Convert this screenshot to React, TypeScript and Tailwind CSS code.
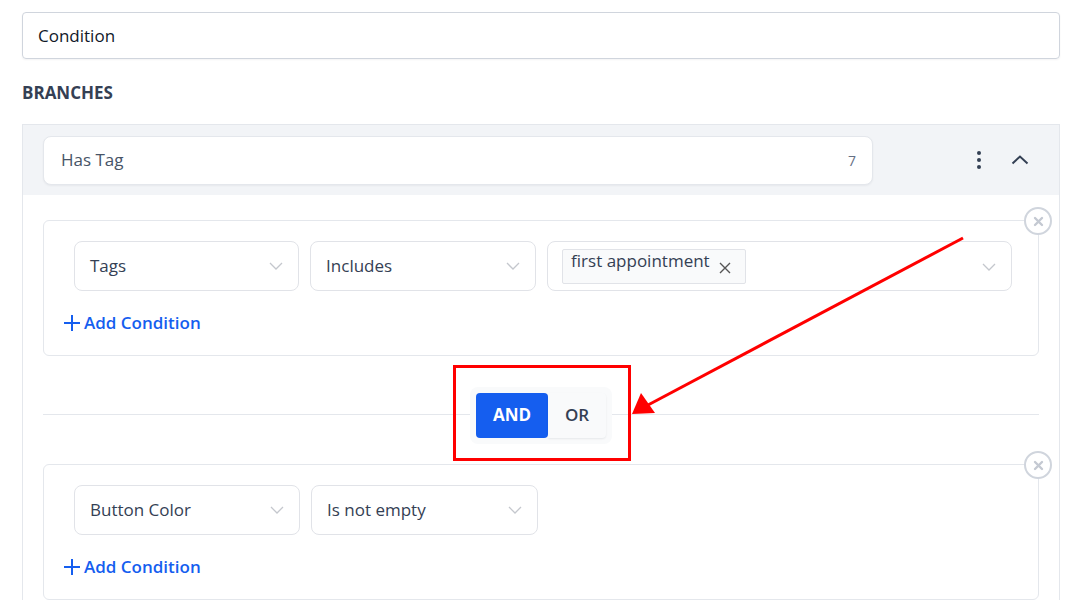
import React from "react";

function ChevronDown() {
  return (
    <svg width="14" height="8" viewBox="0 0 14 8" fill="none" className="shrink-0">
      <path d="M1 1l6 6 6-6" stroke="#c4c7cd" strokeWidth="1.3" />
    </svg>
  );
}

function Select({ label, w }: { label: string; w: string }) {
  return (
    <div className={`${w} h-[50px] border border-[#e1e3e8] rounded-[8px] flex items-center justify-between pl-[15px] pr-[15px] text-[17px] text-[#344054]`}>
      <span>{label}</span>
      <ChevronDown />
    </div>
  );
}

function CloseCircle() {
  return (
    <div className="absolute -right-[14px] -top-[14px] w-[28px] h-[28px] rounded-full border-[2.5px] border-[#d0d5dd] bg-white flex items-center justify-center">
      <svg width="11" height="11" viewBox="0 0 11 11">
        <path d="M2 2l7 7M9 2l-7 7" stroke="#c4c9d2" strokeWidth="2.4" strokeLinecap="round" />
      </svg>
    </div>
  );
}

function AddCondition() {
  return (
    <div className="flex items-center gap-[3px] text-[#155eef] font-semibold text-[17px] ml-[-11px]">
      <svg width="18" height="18" viewBox="0 0 18 18">
        <path d="M9 1v16M1 9h16" stroke="#155eef" strokeWidth="2" />
      </svg>
      <span>Add Condition</span>
    </div>
  );
}

export default function App() {
  return (
    <div className="w-[1083px] h-[613px] overflow-hidden bg-white relative font-['Open_Sans',sans-serif]">
      <div className="pl-[22px] pr-[23px] pt-[12px]">
        <div className="h-[47px] border border-[#d0d5dd] rounded-[4px] flex items-center px-[15px] text-[17px] text-[#101828] shadow-[0_1px_2px_rgba(16,24,40,0.05)]">
          Condition
        </div>
        <div className="mt-[23px] text-[17px] font-bold text-[#344054] leading-[22px]">BRANCHES</div>
        <div className="mt-[20px] border border-b-0 border-[#e4e7ec]">
          <div className="h-[70px] bg-[#f2f4f7] flex items-center pl-[20px]">
            <div className="w-[830px] h-[49px] bg-white rounded-[8px] border border-[#e4e7ec] shadow-[0_1px_2px_rgba(16,24,40,0.05)] flex items-center justify-between pl-[17px] pr-[16px]">
              <span className="text-[17px] text-[#475467]">Has Tag</span>
              <span className="text-[14px] text-[#667085]">7</span>
            </div>
            <div className="ml-[104px] flex flex-col gap-[3px]">
              <div className="w-[4px] h-[4px] rounded-full bg-[#344054]" />
              <div className="w-[4px] h-[4px] rounded-full bg-[#344054]" />
              <div className="w-[4px] h-[4px] rounded-full bg-[#344054]" />
            </div>
            <svg width="18" height="10" viewBox="0 0 18 10" className="ml-[30px]">
              <path d="M1.5 8.5L9 1.5l7.5 7" stroke="#344054" strokeWidth="2" fill="none" />
            </svg>
          </div>
          <div className="px-[20px] pt-[25px]">
            <div className="relative border border-[#e4e7ec] rounded-[6px] h-[136px] pl-[30px] pr-[26px] pt-[20px]">
              <CloseCircle />
              <div className="flex gap-[11px]">
                <Select label="Tags" w="w-[226px]" />
                <Select label="Includes" w="w-[227px]" />
                <div className="w-[467px] h-[50px] border border-[#e1e3e8] rounded-[8px] flex items-start justify-between pl-[14px] pr-[15px] pt-[7px]">
                  <div className="h-[35px] bg-[#f9fafb] border border-[#e1e3e8] rounded-[2px] flex items-start pl-[8px] pr-[13px]">
                    <span className="text-[17px] text-[#344054] leading-[22px] mt-[0px]">first appointment</span>
                    <svg width="14" height="14" viewBox="0 0 14 14" className="ml-[8px] mt-[11px]">
                      <path d="M2 2l10 10M12 2L2 12" stroke="#555" strokeWidth="1.4" />
                    </svg>
                  </div>
                  <div className="mt-[14px]"><ChevronDown /></div>
                </div>
              </div>
              <div className="mt-[19px]"><AddCondition /></div>
            </div>

            <div className="relative h-[108px] pt-[10px] flex items-center justify-center">
              <div className="absolute left-0 right-0 top-[58px] h-px bg-[#e4e7ec]" />
              <div className="relative bg-[#f9fafb] rounded-[8px] p-[6px] flex">
                <div className="h-[45px] w-[72px] rounded-[4px] bg-[#155eef] text-white font-bold text-[17px] flex items-center justify-center">AND</div>
                <div className="h-[45px] w-[58px] rounded-r-[4px] bg-[#f9fafb] shadow-[0_1px_2px_rgba(16,24,40,0.08)] text-[#344054] font-semibold text-[17px] flex items-center justify-center">OR</div>
              </div>
            </div>

            <div className="relative border border-[#e4e7ec] rounded-[6px] h-[136px] pl-[30px] pr-[26px] pt-[20px]">
              <CloseCircle />
              <div className="flex gap-[11px]">
                <Select label="Button Color" w="w-[226px]" />
                <Select label="Is not empty" w="w-[227px]" />
              </div>
              <div className="mt-[19px]"><AddCondition /></div>
            </div>
          </div>
        </div>
      </div>

      {/* annotation overlay */}
      <div className="absolute left-[453px] top-[365px] w-[178px] h-[96px] border-[3px] border-[#ff0000]" />
      <svg className="absolute left-0 top-0" width="1083" height="613" viewBox="0 0 1083 613">
        <line x1="963" y1="238" x2="648" y2="405" stroke="#ff0000" strokeWidth="3" />
        <path d="M632 414 L641 393 L655 413 Z" fill="#ff0000" />
      </svg>
    </div>
  );
}
